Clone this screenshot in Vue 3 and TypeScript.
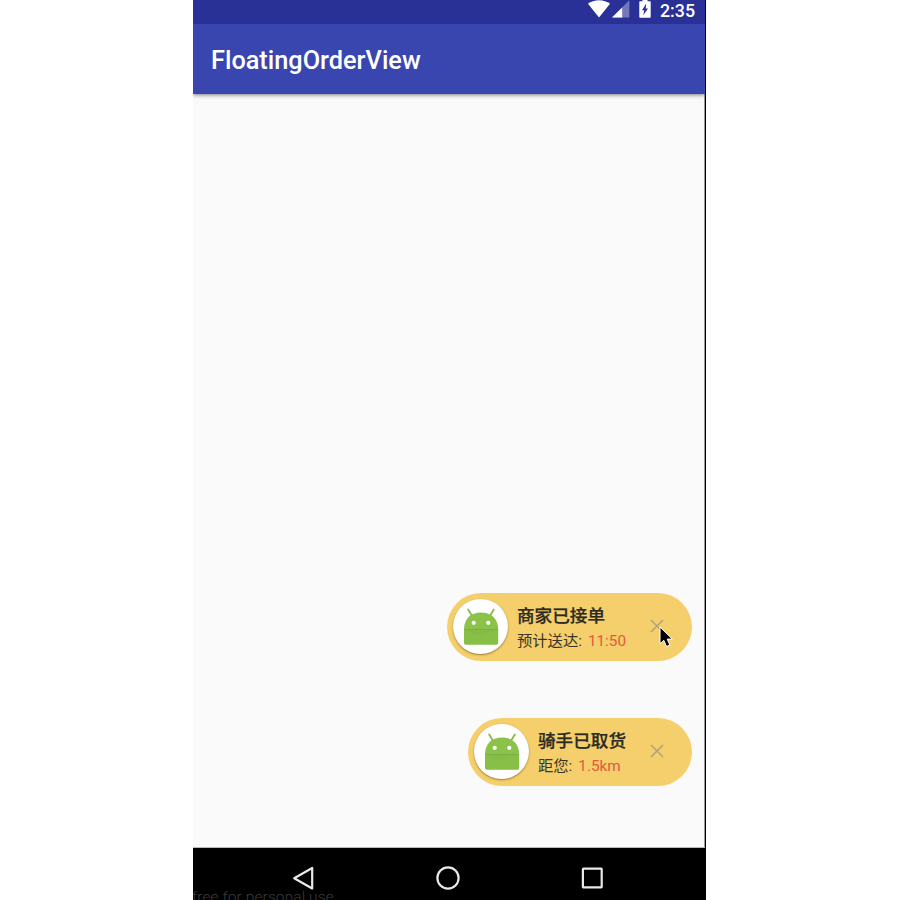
<script setup lang="ts">
interface Order {
  id: number
  title: string
  label: string
  value: string
  hovered: boolean
}

const orders: Order[] = [
  { id: 1, title: '商家已接单', label: '预计送达:', value: '11:50', hovered: true },
  { id: 2, title: '骑手已取货', label: '距您:', value: '1.5km', hovered: false },
]
</script>

<template>
  <div class="page">
    <div class="device">
      <div class="status-bar">
        <svg class="wifi" width="22" height="18" viewBox="0 0 22 18">
          <path d="M0 3.8C3 1.6 6.8 .3 11 .3s8 1.3 11 3.5L11 17.6z" fill="#fff" />
        </svg>
        <svg class="signal" width="18" height="18" viewBox="0 0 18 18">
          <path d="M17.3 .3V17.6H0z" fill="#7477b9" />
          <path d="M10.2 7.4V17.6H0z" fill="#fff" />
        </svg>
        <svg class="battery" width="12" height="18" viewBox="0 0 12 18">
          <path d="M3.5 0h5v1.2H11q.7 0 .7.7v15.1q0 .8-.8.8H1.1q-.8 0-.8-.8V1.9q0-.7.8-.7h2.4z" fill="#fff" />
          <path d="M7.2 3.6 3 10.2H5.2L4.3 15.2 9 8.4H6.7z" fill="#293196" />
        </svg>
        <span class="clock">2:35</span>
      </div>
      <header class="app-bar">
        <h1 class="app-title">FloatingOrderView</h1>
      </header>
      <main class="content">
        <section v-for="order in orders" :key="order.id" class="order">
          <div class="avatar">
            <svg width="40" height="42" viewBox="0 0 40 42">
              <path d="M10.5 9 7.2 3.5M29.5 9l3.3-5.5" stroke="#8bb84b" stroke-width="1.8" stroke-linecap="round" />
              <path d="M3 23.5C3 13 9.5 6.5 20 6.5S37.2 13 37.2 23.5z" fill="#8bc34a" />
              <path d="M3 23.5h34.2v13.4q0 1.8-1.8 1.8H4.8q-1.8 0-1.8-1.8z" fill="#87bf47" />
              <path d="M3 23.5h34.2L15 29.5z" fill="#84bb46" />
              <path d="M3 23.5h34.2" stroke="#76a842" stroke-width=".8" />
              <circle cx="12.7" cy="16.8" r="2.1" fill="#fff" />
              <circle cx="27.3" cy="16.8" r="2.1" fill="#fff" />
            </svg>
          </div>
          <div class="info">
            <div class="title">{{ order.title }}</div>
            <div class="detail">
              <span>{{ order.label }}</span>
              <span class="value">{{ order.value }}</span>
            </div>
          </div>
          <div class="close">
            <svg width="14" height="14" viewBox="0 0 14 14">
              <path d="M1 1l12 12M13 1L1 13" stroke="#b3a37c" stroke-width="1.6" />
            </svg>
            <svg v-if="order.hovered" class="pointer" width="15" height="22" viewBox="0 0 15 22">
              <path
                d="M1 1V17.8l3.8-3.5 2.7 6.2 3.4-1.5-2.7-5.9h5.1z"
                fill="#000"
                stroke="#fff"
                stroke-width="1"
                stroke-linejoin="round"
              />
            </svg>
          </div>
        </section>
      </main>
      <nav class="nav-bar">
        <svg width="24" height="26" viewBox="0 0 24 26">
          <path d="M21.2 3v20.5L3.2 13.2z" fill="none" stroke="#e9e9e9" stroke-width="2.2" stroke-linejoin="round" />
        </svg>
        <svg width="24" height="26" viewBox="0 0 24 26">
          <circle cx="12" cy="13" r="10.6" fill="none" stroke="#e9e9e9" stroke-width="2.2" />
        </svg>
        <svg width="24" height="26" viewBox="0 0 24 26">
          <rect x="2.9" y="3.6" width="18.8" height="18.8" rx=".6" fill="none" stroke="#e9e9e9" stroke-width="2.2" />
        </svg>
        <div class="watermark">free for personal use</div>
      </nav>
    </div>
  </div>
</template>

<style>
body {
  margin: 0;
  background: #fff;
}
</style>

<style scoped>
.page {
  height: 900px;
  padding-left: 193px;
  overflow: hidden;
  background: #fff;
  font-family: Roboto, 'Noto Sans CJK SC', sans-serif;
}
.device {
  box-sizing: border-box;
  display: flex;
  flex-direction: column;
  width: 513px;
  height: 900px;
  border-right: 1px solid #000;
  background: #fafafa;
}
svg {
  display: block;
  flex: none;
}
.status-bar {
  box-sizing: border-box;
  display: flex;
  flex: none;
  height: 24px;
  padding-right: 10px;
  justify-content: flex-end;
  background: #293196;
  color: #fff;
}
.signal {
  margin-left: 2px;
}
.battery {
  margin-left: 9px;
}
.clock {
  width: 35px;
  margin-left: 9px;
  font-size: 17.8px;
  font-weight: 500;
  line-height: 21px;
  white-space: nowrap;
}
.app-bar {
  position: relative;
  display: flex;
  flex: none;
  height: 70px;
  padding-left: 18px;
  align-items: center;
  background: #3a46b0;
  box-shadow: 0 1px 4px rgba(0, 0, 0, 0.5);
  clip-path: inset(0 0 -8px 0);
}
.app-title {
  margin: 4px 0 0;
  color: #fff;
  font-size: 25.3px;
  font-weight: 500;
  line-height: 32px;
}
.content {
  display: flex;
  flex: 1;
  flex-direction: column;
  align-items: flex-end;
  justify-content: flex-end;
  gap: 57.5px;
  padding: 0 12px 62.5px 0;
  border-right: 1px solid #999;
}
.order {
  box-sizing: border-box;
  display: flex;
  height: 67.5px;
  padding: 0 28px 0 6px;
  align-items: center;
  border-radius: 34px;
  background: #f4cf6c;
}
.avatar {
  display: flex;
  width: 55px;
  height: 55px;
  align-items: center;
  justify-content: center;
  border-radius: 50%;
  background: #fff;
  box-shadow: 0 1px 2px rgba(80, 60, 0, 0.55);
}
.info {
  margin: 5px 0 0 9px;
  white-space: nowrap;
}
.title {
  color: #2c2a20;
  font-size: 17.6px;
  font-weight: 500;
  line-height: 25px;
  -webkit-text-stroke: 0.25px #2c2a20;
}
.detail {
  display: flex;
  gap: 6px;
  color: #3a3526;
  font-size: 15.3px;
  line-height: 25px;
}
.value {
  color: #e3583f;
}
.close {
  position: relative;
  margin: 0 0 1px 24px;
}
.pointer {
  position: absolute;
  top: 7px;
  left: 9px;
}
.nav-bar {
  position: relative;
  display: flex;
  flex: none;
  height: 52px;
  padding: 4px 0 0 98px;
  box-sizing: border-box;
  align-items: center;
  gap: 120.5px;
  overflow: hidden;
  background: #000;
  box-shadow: 0 -1px 0 #bbb;
}
.nav-bar svg {
  margin-top: 4px;
}
.watermark {
  position: absolute;
  top: 39px;
  left: -1px;
  color: #3b3b3b;
  font-size: 15.5px;
  font-weight: 300;
  line-height: 20px;
  letter-spacing: 0.1px;
  white-space: nowrap;
}
</style>
